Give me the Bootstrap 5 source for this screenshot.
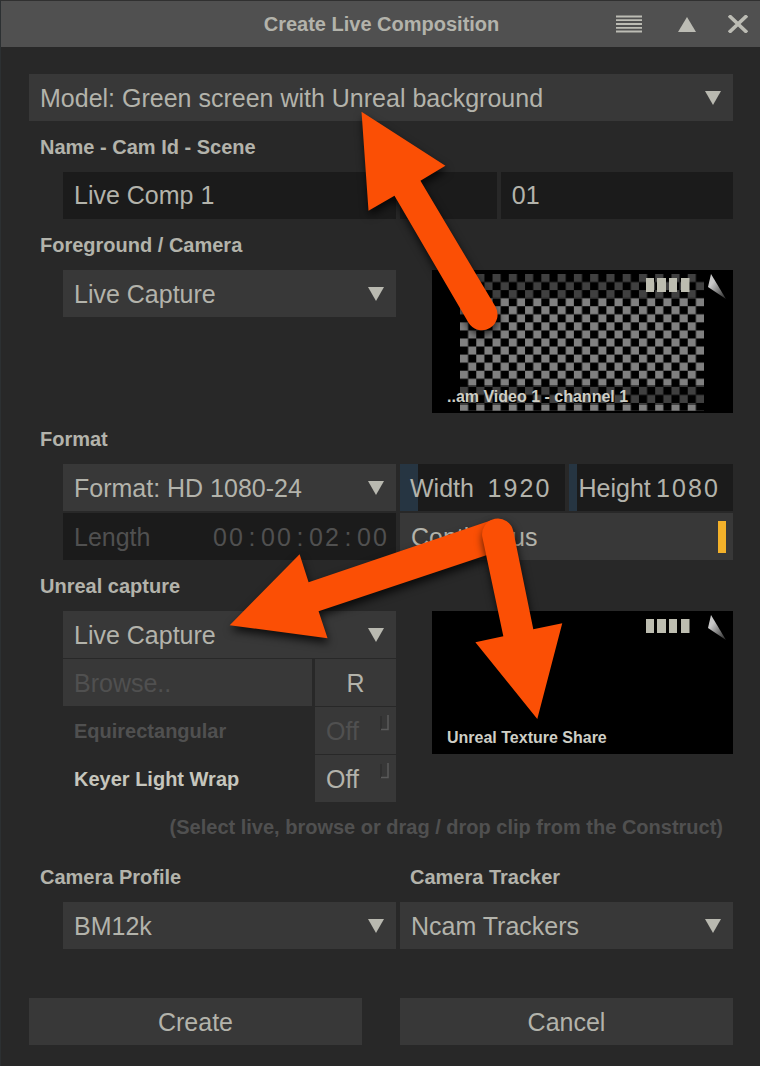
<!DOCTYPE html>
<html lang="en">
<head>
<meta charset="utf-8">
<meta name="viewport" content="width=device-width, initial-scale=1">
<title>Create Live Composition</title>
<link href="https://cdn.jsdelivr.net/npm/bootstrap@5.3.0/dist/css/bootstrap.min.css" rel="stylesheet">
<style>
  :root { --ink: #b3b3ab; --face: #383838; --well: #1b1b1b; --faint: #505050; }
  body { background: #282828; color: var(--ink); font: 25px/30px "Liberation Sans", Arial, sans-serif; }
  .dialog { min-height: 100vh; border-top: 1px solid #303030; border-left: 1px solid #2c3032; }
  .titlebar { height: 46px; background: #505050; display: grid; grid-template-columns: 1fr auto 1fr; align-items: center; padding: 0 12px 0 14px; }
  .titlebar h1 { font-size: 20px; line-height: 24px; font-weight: 700; margin: 0; }
  .tool { border: 0; background: none; padding: 0; line-height: 0; color: #bcbcb4; }
  .tools { display: flex; justify-content: flex-end; align-items: center; }
  .sheet { padding: 27px 27px 20px 28px; }
  .caption { display: flex; align-items: center; height: 51px; padding-left: 11px; font-size: 20px; line-height: 24px; font-weight: 700; margin: 0; }
  .hint { height: 49px; padding-right: 10px; }
  .dim { color: var(--faint); }
  .bright { color: #c6c6bd; }
  .indent { padding-left: 34px; }
  .pair { display: grid; grid-template-columns: minmax(0, 1fr) minmax(0, 1fr); gap: 2px 4px; }
  .scene { display: grid; grid-template-columns: 5fr 12fr; gap: 4px; }
  .ctl, .ctl:focus, .ctl:disabled {
    height: 47px; width: 100%; border: 0; border-radius: 0; padding: 0 11px; font-size: 25px; line-height: 30px;
    background-color: var(--face); color: var(--ink); box-shadow: none; text-align: left; opacity: 1;
  }
  select.ctl { background-image: url("data:image/svg+xml,%3Csvg xmlns='http://www.w3.org/2000/svg' viewBox='0 0 16 14'%3E%3Cpath d='M0 0h16L8 14z' fill='%23b9b9b0'/%3E%3C/svg%3E"); background-size: 16px 14px; background-position: right 12px center; padding-right: 34px; }
  .ctl.well, .ctl.well:focus { background-color: var(--well); }
  .ctl.off { color: var(--faint); }
  .meter { display: flex; align-items: center; justify-content: space-between; position: relative; }
  .meter > span { position: relative; }
  .meter > .fill { position: absolute; left: 0; top: 0; bottom: 0; background: #263542; }
  .ctl.tight { padding-right: 14px; padding-left: 10px; }
  .ctl.time { padding-right: 8px; }
  .digits { display: flex; }
  .digits i { width: 16px; text-align: center; font-style: normal; }
  .lamp { width: 8px; height: 32px; background: #f3b12a; }
  .toggle { display: flex; align-items: center; justify-content: space-between; }
  .ctl.toggle { padding-right: 7px; }
  .source { display: grid; grid-template-columns: minmax(0, 1fr) 81px; gap: 1px 3px; align-items: center; }
  .source .wide { grid-column: 1 / -1; }
  .source .caption { height: 47px; }
  .thumb { margin-left: 32px; background: #000; position: relative; }
  .thumb > svg { display: block; width: 100%; height: auto; }
  .thumb figcaption { position: absolute; left: 15px; bottom: 4px; font: 700 16px/24px "Liberation Sans", sans-serif; color: #cfcfc6; white-space: nowrap; }
  .actions { display: grid; grid-template-columns: 1fr 1fr; gap: 38px; margin-top: 49px; }
  .actions .ctl { text-align: center; }
  .arrows { position: absolute; left: 0; top: 0; width: 100%; height: auto; pointer-events: none; overflow: visible; }
</style>
<script src="https://cdn.jsdelivr.net/npm/bootstrap@5.3.0/dist/js/bootstrap.bundle.min.js" defer></script>
</head>
<body>
<main class="dialog position-relative">
  <header class="titlebar">
    <span></span>
    <h1>Create Live Composition</h1>
    <div class="tools">
      <button class="tool me-4" type="button" aria-label="Menu"><svg class="me-2" width="26" height="18" viewBox="0 0 26 18"><path d="M0 1.500h26M0 5.200h26M0 9h26M0 12.800h26M0 16.500h26" stroke="currentColor" stroke-width="1.800"/></svg></button>
      <button class="tool me-4" type="button" aria-label="Collapse"><svg class="ms-1 me-2" width="18" height="15" viewBox="0 0 18 15"><path d="M9 0l9 15H0z" fill="currentColor"/></svg></button>
      <button class="tool" type="button" aria-label="Close"><svg width="20" height="18" viewBox="0 0 20 18"><path d="M1 .5l18 17M19 .5l-18 17" stroke="currentColor" stroke-width="3.600"/></svg></button>
    </div>
  </header>

  <form class="sheet">
    <select class="form-select ctl" aria-label="Model"><option>Model: Green screen with Unreal background</option></select>

    <label class="caption" for="name">Name - Cam Id - Scene</label>
    <div class="indent pair">
      <input id="name" class="form-control ctl well" value="Live Comp 1">
      <div class="scene">
        <input class="form-control ctl well" aria-label="Cam Id">
        <input class="form-control ctl well" aria-label="Scene" value="01">
      </div>
    </div>

    <label class="caption" for="camera">Foreground / Camera</label>
    <div class="indent pair align-items-start">
      <select id="camera" class="form-select ctl"><option>Live Capture</option></select>
      <figure class="thumb mb-0">
        <svg viewBox="0 0 301 143">
          <defs>
            <pattern id="check" width="2" height="2" patternUnits="userSpaceOnUse"><path d="M0 0h1v1H0zM1 1h1v1H1z" fill="#808080"/></pattern>
            <linearGradient id="peel" x1="0" y1="0" x2="1" y2="1"><stop offset=".3" stop-color="#c8c8c8"/><stop offset="1" stop-color="#222"/></linearGradient>
            <g id="marks">
              <path d="M214 8h8v14h-8zM225 8h9v14h-9zM237 8h8v14h-8zM249 8h8.500v14H249z" fill="#bdbdb0"/>
              <path d="M279 4l15 25-18-12z" fill="url(#peel)"/>
            </g>
          </defs>
          <svg x="28" y="4" width="244" height="137" viewBox="0 0 30 17" preserveAspectRatio="none"><rect width="30" height="17" fill="url(#check)"/></svg>
          <path d="M0 0h301v28H0zM0 115h301v20H0z" opacity=".5"/>
          <use href="#marks"/>
        </svg>
        <figcaption>..am Video 1 - channel 1</figcaption>
      </figure>
    </div>

    <label class="caption" for="format">Format</label>
    <div class="indent pair">
      <select id="format" class="form-select ctl"><option>Format: HD 1080-24</option></select>
      <div class="pair">
        <button type="button" class="ctl well meter tight"><span class="fill" style="width:11%"></span><span>Width</span><span class="digits"><i>1</i><i>9</i><i>2</i><i>0</i></span></button>
        <button type="button" class="ctl well meter tight"><span class="fill" style="width:5%"></span><span>Height</span><span class="digits"><i>1</i><i>0</i><i>8</i><i>0</i></span></button>
      </div>
      <button type="button" class="ctl well off meter time" disabled><span>Length</span><span class="digits"><i>0</i><i>0</i><i>:</i><i>0</i><i>0</i><i>:</i><i>0</i><i>2</i><i>:</i><i>0</i><i>0</i></span></button>
      <button type="button" class="ctl toggle" aria-pressed="true">Continuous<span class="lamp"></span></button>
    </div>

    <label class="caption" for="capture">Unreal capture</label>
    <div class="indent pair align-items-start">
      <div class="source">
        <select id="capture" class="form-select ctl wide"><option>Live Capture</option></select>
        <button type="button" class="ctl off" disabled>Browse..</button>
        <button type="button" class="ctl text-center">R</button>
        <label class="caption dim" for="equi">Equirectangular</label>
        <button type="button" id="equi" class="ctl toggle off" disabled>Off<svg class="mb-3" width="9" height="16" viewBox="0 0 9 16"><path d="M1 1v14" stroke="#303030" stroke-width="2"/><path d="M1 14.500h7V0" fill="none" stroke="#5a5a5a" stroke-width="1.500"/></svg></button>
        <label class="caption bright" for="wrap">Keyer Light Wrap</label>
        <button type="button" id="wrap" class="ctl toggle bright">Off<svg class="mb-3" width="9" height="16" viewBox="0 0 9 16"><path d="M1 1v14" stroke="#303030" stroke-width="2"/><path d="M1 14.500h7V0" fill="none" stroke="#5a5a5a" stroke-width="1.500"/></svg></button>
      </div>
      <figure class="thumb mb-0">
        <svg viewBox="0 0 301 143"><use href="#marks"/></svg>
        <figcaption>Unreal Texture Share</figcaption>
      </figure>
    </div>

    <p class="caption hint dim justify-content-end">(Select live, browse or drag / drop clip from the Construct)</p>

    <div class="pair">
      <label class="caption" for="profile">Camera Profile</label>
      <label class="caption ms-3" for="tracker">Camera Tracker</label>
    </div>
    <div class="indent pair">
      <select id="profile" class="form-select ctl"><option>BM12k</option></select>
      <select id="tracker" class="form-select ctl"><option>Ncam Trackers</option></select>
    </div>

    <div class="actions">
      <button type="submit" class="ctl">Create</button>
      <button type="button" class="ctl">Cancel</button>
    </div>
  </form>

  <svg class="arrows" viewBox="0 0 760 1066" fill="#fb4f05" aria-hidden="true">
    <defs><filter id="shade" x="-20%" y="-20%" width="140%" height="140%" color-interpolation-filters="sRGB"><feDropShadow dx="1" dy="5" stdDeviation="4" flood-color="#000" flood-opacity=".75"/></filter></defs>
    <path filter="url(#shade)" d="M361 111l84 54-25 15 75 126a15.500 15.500 0 0 1-27 16L394 195l-26 15z"/>
    <path filter="url(#shade)" d="M229 625l70-71 9 28 183-62a16 16 0 0 1 10 30L318 611l9 27z"/>
    <path filter="url(#shade)" d="M537 719l-62-77 28-6-21-99a15.500 15.500 0 0 1 31-6l20 98 29-6z"/>
  </svg>
</main>
</body>
</html>
